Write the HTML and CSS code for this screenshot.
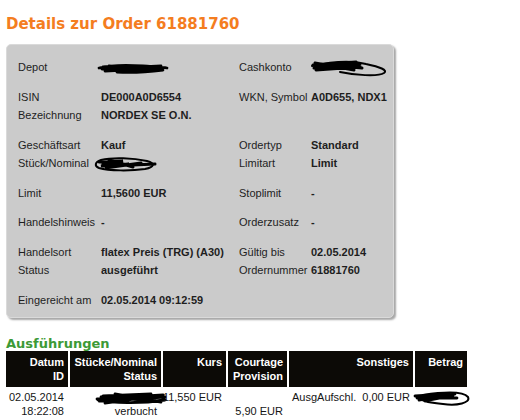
FILE: index.html
```html
<!DOCTYPE html>
<html lang="de">
<head>
    <meta charset="utf-8" />
    <title>Details zur Order</title>
    <link rel="stylesheet" href="styles.css">
</head>
<body>
    <h1 class="pageTitle">Details zur Order 61881760</h1>

    <div class="orderBox">
        <div class="group">
            <span>Depot</span>
            <span class="val">
                <svg class="scribble depotMark" width="72" height="13" viewBox="0 0 72 13">
                    <path d="M2 6C14 3 30 3 46 4S66 5 70 6M5 7L64 4M8 9L66 6M6 5L60 9M12 4L58 8M20 10C34 11 50 10 66 8M10 6L62 6" fill="none" stroke="#000" stroke-width="2.8" stroke-linecap="round"/>
                </svg>
            </span>
            <span>Cashkonto</span>
            <span class="val">
                <svg class="scribble cashMark" width="78" height="20" viewBox="0 0 78 20">
                    <path d="M3 7L46 4M4 10L50 6M6 12L48 9M5 5L44 12M8 6L52 10M6 8L50 8" fill="none" stroke="#000" stroke-width="3" stroke-linecap="round"/>
                    <path d="M2 8C20 4 40 2 56 6C70 9 78 12 74 15C68 19 44 17 30 14" fill="none" stroke="#000" stroke-width="2" stroke-linecap="round"/>
                </svg>
            </span>
        </div>

        <div class="group">
            <span>ISIN</span><span class="val">DE000A0D6554</span>
            <span>WKN, Symbol</span><span class="val">A0D655, NDX1</span>
            <span>Bezeichnung</span><span class="val">NORDEX SE O.N.</span>
            <span></span><span></span>
        </div>

        <div class="group">
            <span>Geschäftsart</span><span class="val">Kauf</span>
            <span>Ordertyp</span><span class="val">Standard</span>
            <span>Stück/Nominal</span>
            <span class="val">
                <svg class="scribble pieceMark" width="64" height="16" viewBox="0 0 64 16">
                    <path d="M8 4C20 1 40 2 54 5C62 7 62 11 52 13C38 15 16 15 6 12C1 10 2 6 8 4Z" fill="none" stroke="#000" stroke-width="2"/>
                    <path d="M6 6L30 5L8 10L36 8L12 12L48 7M16 4L40 11M40 9L62 8M10 8L44 9" fill="none" stroke="#000" stroke-width="3" stroke-linecap="round"/>
                </svg>
            </span>
            <span>Limitart</span><span class="val">Limit</span>
        </div>

        <div class="group">
            <span>Limit</span><span class="val">11,5600 EUR</span>
            <span>Stoplimit</span><span class="val">-</span>
        </div>

        <div class="group">
            <span>Handelshinweis</span><span class="val">-</span>
            <span>Orderzusatz</span><span class="val">-</span>
        </div>

        <div class="group">
            <span>Handelsort</span><span class="val">flatex Preis (TRG) (A30)</span>
            <span>Gültig bis</span><span class="val">02.05.2014</span>
            <span>Status</span><span class="val">ausgeführt</span>
            <span>Ordernummer</span><span class="val">61881760</span>
        </div>

        <div class="group">
            <span>Eingereicht am</span><span class="val">02.05.2014 09:12:59</span>
            <span></span><span></span>
        </div>
    </div>

    <h2 class="sectionTitle">Ausführungen</h2>
    <table class="execTable">
        <colgroup>
            <col class="cDate">
            <col class="cPieces">
            <col class="cRate">
            <col class="cFee">
            <col class="cOther">
            <col class="cSum">
        </colgroup>
        <tr>
            <th>Datum<br>ID</th>
            <th>Stücke/Nominal<br>Status</th>
            <th>Kurs</th>
            <th>Courtage<br>Provision</th>
            <th>Sonstiges</th>
            <th>Betrag</th>
        </tr>
        <tr>
            <td>02.05.2014<br>18:22:08</td>
            <td>
                <svg class="scribble tableMark" width="72" height="14" viewBox="0 0 72 14">
                    <path d="M2 8L68 4M4 10L70 6M6 6L64 10M10 12L60 5M20 3L66 11M3 9C20 13 50 12 70 9M8 5L56 3M12 8L60 8" fill="none" stroke="#000" stroke-width="2.8" stroke-linecap="round"/>
                </svg><br>verbucht
            </td>
            <td>11,550 EUR</td>
            <td><br>5,90 EUR</td>
            <td class="other">AusgAufschl.&nbsp; 0,00 EUR</td>
            <td>
                <svg class="scribble sumMark" width="58" height="20" viewBox="0 0 58 20">
                    <path d="M2 8L36 6M4 10L40 9M6 12L42 6M12 13L38 8M8 9L44 10" fill="none" stroke="#000" stroke-width="2.8" stroke-linecap="round"/>
                    <path d="M10 7C30 4 50 3 55 9C58 15 44 18 30 16C18 15 10 13 8 11" fill="none" stroke="#000" stroke-width="2" stroke-linecap="round"/>
                </svg>
            </td>
        </tr>
    </table>
</body>
</html>
```

FILE: styles.css
```css
body {
    margin: 0;
    padding: 0 6px;
    font-family: "Liberation Sans", Arial, sans-serif;
    font-size: 11px;
    color: #1e1e1e;
    background: #fff;
}

.pageTitle {
    margin: 14px 0 10px 0;
    font-family: "DejaVu Sans", Verdana, sans-serif;
    font-size: 15px;
    line-height: 20px;
    font-weight: bold;
    color: #f47d1f;
}

.orderBox {
    width: 364px;
    padding: 13px 11px 8px 11px;
    background: #cbcbcb;
    border: 1px solid #dadada;
    border-radius: 5px;
    box-shadow: 2px 2px 2px rgba(0, 0, 0, 0.35);
}

.group {
    display: grid;
    grid-template-columns: 83px 138px 72px 71px;
    line-height: 18.5px;
    white-space: nowrap;
}

.group + .group {
    margin-top: 11px;
}

.val {
    font-weight: bold;
}

.scribble {
    vertical-align: middle;
}

.depotMark {
    margin: -4px 0 -4px -4px;
}

.cashMark {
    margin: -6px 0 -6px -1px;
}

.pieceMark {
    margin: -4px 0 -4px -8px;
}

.sectionTitle {
    margin: 18px 0 0 0;
    font-family: "DejaVu Sans", Verdana, sans-serif;
    font-size: 13px;
    line-height: 15px;
    font-weight: bold;
    color: #3c9a36;
}

.execTable {
    border-collapse: separate;
    border-spacing: 0;
    table-layout: fixed;
    width: 461px;
}

.cDate { width: 62px; }
.cPieces { width: 93px; }
.cRate { width: 65px; }
.cFee { width: 61px; }
.cOther { width: 126px; }
.cSum { width: 54px; }

.execTable th {
    box-sizing: border-box;
    padding: 4px 4px 4px 0;
    background: #0c0a06;
    color: #fff;
    font-weight: bold;
    line-height: 14px;
    text-align: right;
    vertical-align: top;
}

.execTable th + th {
    border-left: 2px solid #fff;
}

.execTable td {
    padding: 3px 4px 0 0;
    line-height: 14px;
    text-align: right;
    vertical-align: top;
    white-space: nowrap;
    color: #151515;
}

.execTable td.other {
    padding-right: 3px;
}

.tableMark {
    margin: -2px -10px -2px 0;
}

.sumMark {
    margin: -4px -2px -4px 0;
}
```
